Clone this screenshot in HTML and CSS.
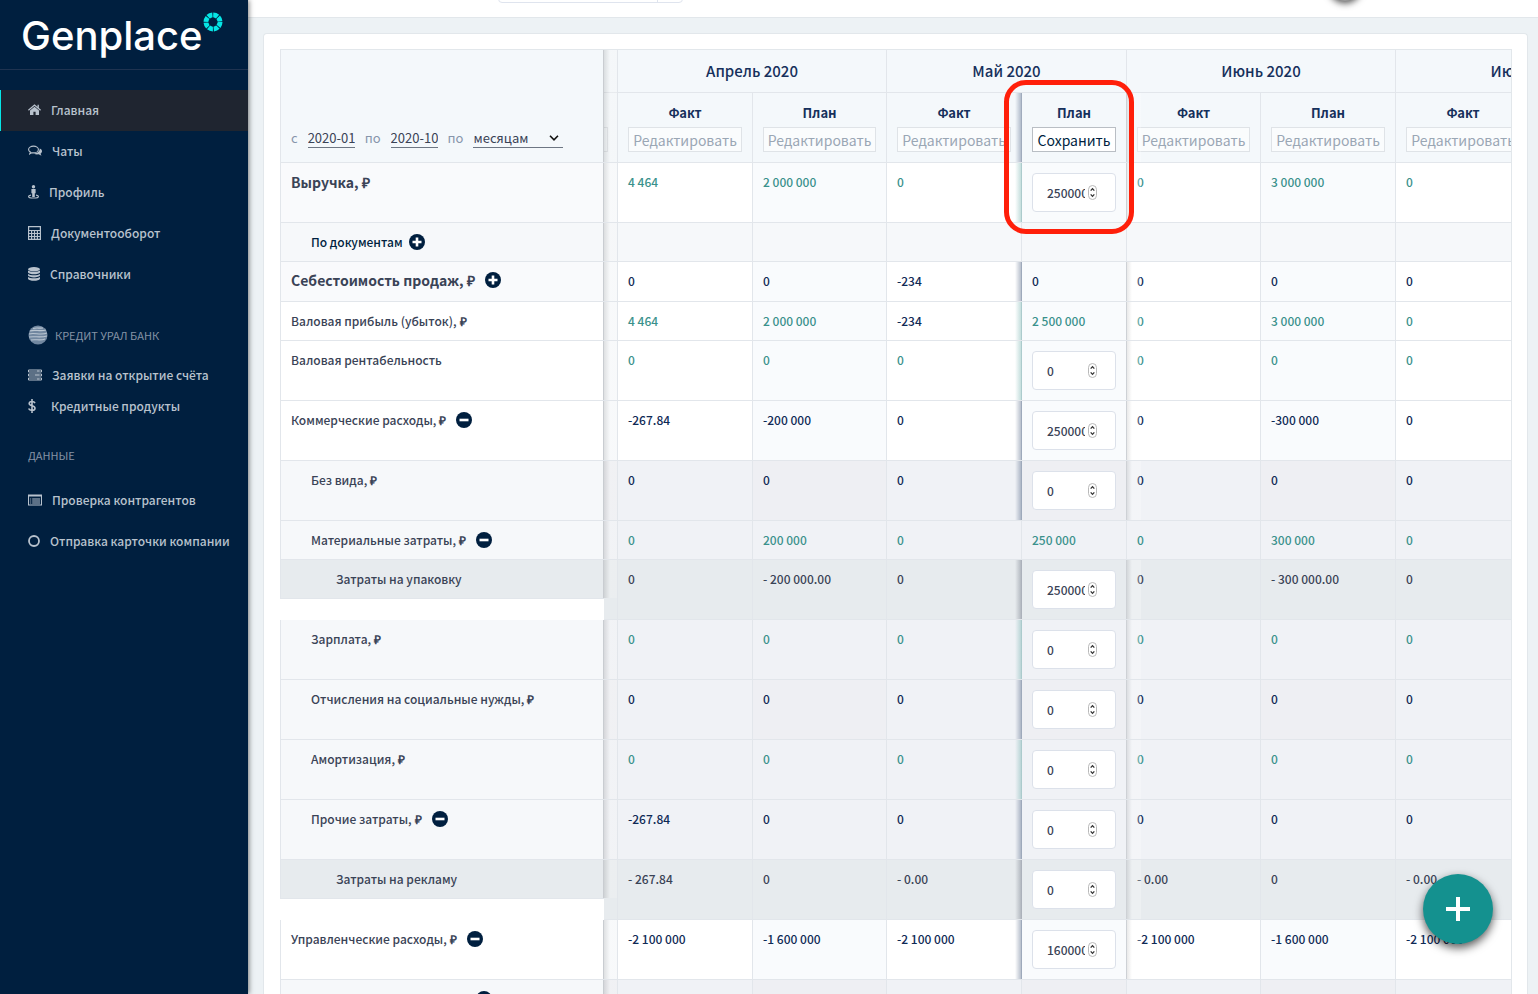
FILE: index.html
```html
<!DOCTYPE html>
<html lang="ru">
<head>
<meta charset="utf-8">
<title>Genplace</title>
<link rel="stylesheet" href="styles.css">
</head>
<body>
<svg class="defs" aria-hidden="true">
  <symbol id="spin" viewBox="0 0 9 15"><rect x=".5" y=".5" width="8" height="14" rx="4" fill="#fff" stroke="#b9b9b9"/><path d="M2.700 5.600 4.500 3.600l1.800 2M2.700 9.400l1.800 2 1.800-2" fill="none" stroke="#333" stroke-width="1.300"/></symbol>
  <symbol id="plus" viewBox="0 0 16 16"><circle cx="8" cy="8" r="8" fill="#001f3f"/><path d="M8 3.500v9M3.500 8h9" stroke="#fff" stroke-width="2.600"/></symbol>
  <symbol id="minus" viewBox="0 0 16 16"><circle cx="8" cy="8" r="8" fill="#001f3f"/><path d="M3.500 8h9" stroke="#fff" stroke-width="2.600"/></symbol>
</svg>
<div class="shell">
  <aside class="sidebar">
    <a class="logo" href="#"><span>Genplace</span>
      <svg class="logo-mark" viewBox="0 0 20 20"><circle cx="10" cy="10" r="7" fill="none" stroke="#05e6e6" stroke-width="5" stroke-dasharray="4.700 .8"/><path d="m10 4.600 1 2.900 2.800-1.300-1.300 2.800 2.900 1-2.900 1 1.300 2.800-2.800-1.300-1 2.900-1-2.900-2.800 1.300 1.300-2.800-2.900-1 2.900-1-1.300-2.800 2.800 1.300z" fill="#001f3f"/></svg>
    </a>
    <nav class="nav">
      <a class="item active" href="#"><svg width="13" height="12" viewBox="0 0 13 12"><path d="M6.500 2.700 2 6.400V11h3.400V7.800h2.200V11H11V6.400z" fill="currentColor"/><path d="M.4 6.200 6.500 1.100l6.100 5.100M10.200.8v3" fill="none" stroke="currentColor" stroke-width="1.300"/></svg>Главная</a>
      <a class="item" href="#"><svg width="14" height="12" viewBox="0 0 14 12"><path d="M5.500 1.100c2.700 0 4.900 1.500 4.900 3.400S8.200 7.900 5.500 7.900c-.6 0-1.100-.1-1.600-.2L1.700 8.900l.7-1.800C1.300 6.500.6 5.600.6 4.500c0-1.900 2.200-3.400 4.900-3.400z" fill="none" stroke="currentColor" stroke-width="1.100"/><path d="M11.700 3.600c1.400.5 2.300 1.500 2.300 2.700 0 1-.6 1.800-1.500 2.400l1 2-2.900-1.400c-1.900.3-3.500 0-4.700-.8 3.300 0 6-1.900 5.800-4.900z" fill="currentColor"/></svg>Чаты</a>
      <a class="item" href="#"><svg width="11" height="14" viewBox="0 0 11 14"><circle cx="5.500" cy="1.800" r="1.700" fill="currentColor"/><path d="M3.400 4h4.200v4.300h-.8V12H4.200V8.300h-.8z" fill="currentColor"/><path d="M3 10.200c-1.500.2-2.400.6-2.400 1.200 0 .9 2.200 1.600 4.900 1.600s4.900-.7 4.900-1.600c0-.6-.9-1-2.400-1.200" fill="none" stroke="currentColor" stroke-width="1.200"/></svg>Профиль</a>
      <a class="item" href="#"><svg width="13" height="14" viewBox="0 0 13 14"><path d="M.6.600h11.800v12.800H.6zM.6 4.500h11.800M.6 7.500h11.800M.6 10.500h11.800M3.600 4.500v9M6.500 4.500v9M9.400 4.500v9" fill="none" stroke="currentColor" stroke-width="1.200"/></svg>Документооборот</a>
      <a class="item" href="#"><svg width="12" height="14" viewBox="0 0 12 14"><ellipse cx="6" cy="2.200" rx="6" ry="2.200" fill="currentColor"/><path d="M0 3.600c2 1.800 10 1.800 12 0v1.900C11 7.900 1 7.900 0 5.500zM0 6.900c2 1.800 10 1.800 12 0v1.700c-1 2.400-11 2.400-12 0zM0 10c2 1.800 10 1.800 12 0v1.700c-1 2.800-11 2.800-12 0z" fill="currentColor"/></svg>Справочники</a>
    </nav>
    <h2 class="group bank"><svg width="20" height="20" viewBox="0 0 20 20"><circle cx="10" cy="10" r="9.500" fill="#7187a0"/><path d="M2 6c5-2 10 1 16-1M1 9c6-2 11 2 18-1M1 12c6-1 11 1 18-1M3 15c5-1 9 1 14-1M5 3.500c3-1 7 0 10-.5" fill="none" stroke="#b9c5d1" stroke-width="1.100"/></svg>КРЕДИТ УРАЛ БАНК</h2>
    <nav class="nav tight">
      <a class="item" href="#"><svg width="14" height="12" viewBox="0 0 14 12"><path d="M.5 1h13v2H.5zM.5 5h13v2H.5zM.5 9h13v2H.5z" fill="none" stroke="currentColor"/><path d="M9 2h2.500M7 6h4.500M9 10h2.500" stroke="currentColor"/></svg>Заявки на открытие счёта</a>
      <a class="item" href="#"><svg width="8" height="14" viewBox="0 0 8 14"><path d="M7 4.100C6.500 3 5.400 2.500 4 2.500c-1.600 0-2.800.8-2.800 2.100C1.200 7.600 7 6 7 9.200c0 1.400-1.300 2.200-3 2.200-1.600 0-2.900-.6-3.400-1.900M4 0v14" fill="none" stroke="currentColor" stroke-width="1.600"/></svg>Кредитные продукты</a>
    </nav>
    <h2 class="group">ДАННЫЕ</h2>
    <nav class="nav data">
      <a class="item" href="#"><svg width="14" height="12" viewBox="0 0 14 12"><path d="M.5 1h13v10H.5zM.5 2h13M2.200 5h1M2.200 7h1M2.200 9h1M4.200 5h7.800M4.200 7h7.800M4.200 9h7.800" fill="none" stroke="currentColor" stroke-width="1.100"/></svg>Проверка контрагентов</a>
      <a class="item" href="#"><svg width="12" height="12" viewBox="0 0 12 12"><circle cx="6" cy="6" r="5" fill="none" stroke="currentColor" stroke-width="1.800"/></svg>Отправка карточки компании</a>
    </nav>
  </aside>
  <main class="main">
    <header class="topbar"><div class="search"><span></span></div><div class="avatar"></div></header>
    <section class="card">
      <div class="scroller">
        <table class="report">
          <colgroup><col class="c-name"><col class="c-sliver"><col class="c-val"><col class="c-alt"><col class="c-val"><col class="c-edit"><col class="c-alt"><col class="c-val"><col class="c-val"><col class="c-alt"></colgroup>
          <thead>
            <tr class="months">
              <th class="corner" rowspan="2">
                <form class="filter">
                  <label for="from">с</label><input id="from" value="2020-01">
                  <label for="to">по</label><input id="to" value="2020-10">
                  <label for="step">по</label><span class="select"><select id="step"><option>месяцам</option></select><svg width="10" height="6" viewBox="0 0 10 6"><path d="m1 .8 4 4 4-4" fill="none" stroke="#111" stroke-width="1.600"/></svg></span>
                </form>
              </th>
              <th></th><th colspan="2">Апрель 2020</th><th colspan="2">Май 2020</th><th colspan="2">Июнь 2020</th><th colspan="2">Июль 2020</th>
            </tr>
            <tr class="kinds">
              <th class="peek"><span></span></th>
              <th>Факт<button type="button">Редактировать</button></th>
              <th>План<button type="button">Редактировать</button></th>
              <th>Факт<button type="button">Редактировать</button></th>
              <th class="edit">План<button type="button" class="save">Сохранить</button><span class="marker"></span></th>
              <th>Факт<button type="button">Редактировать</button></th>
              <th>План<button type="button">Редактировать</button></th>
              <th>Факт<button type="button">Редактировать</button></th>
              <th></th>
            </tr>
          </thead>
          <tbody>
            <tr class="tall top pos"><th><div class="name">Выручка, <b>₽</b></div></th><td></td><td>4 464</td><td>2 000 000</td><td>0</td><td class="edit"><span class="num"><input type="number" aria-label="Выручка" value="2500000"><svg><use href="#spin"/></svg></span></td><td>0</td><td>3 000 000</td><td>0</td><td></td></tr>
            <tr class="docs"><th><div class="name l1">По документам <button type="button" aria-label="Развернуть"><svg><use href="#plus"/></svg></button></div></th><td></td><td></td><td></td><td></td><td></td><td></td><td></td><td></td><td></td></tr>
            <tr class="top"><th><div class="name">Себестоимость продаж, <b>₽</b><button type="button" aria-label="Развернуть"><svg><use href="#plus"/></svg></button></div></th><td></td><td>0</td><td>0</td><td>-234</td><td class="edit">0</td><td>0</td><td>0</td><td>0</td><td></td></tr>
            <tr class="pos"><th><div class="name">Валовая прибыль (убыток), <b>₽</b></div></th><td></td><td>4 464</td><td>2 000 000</td><td class="neg">-234</td><td class="edit">2 500 000</td><td>0</td><td>3 000 000</td><td>0</td><td></td></tr>
            <tr class="tall pos"><th><div class="name">Валовая рентабельность</div></th><td></td><td>0</td><td>0</td><td>0</td><td class="edit"><span class="num"><input type="number" aria-label="Валовая рентабельность" value="0"><svg><use href="#spin"/></svg></span></td><td>0</td><td>0</td><td>0</td><td></td></tr>
            <tr class="tall"><th><div class="name">Коммерческие расходы, <b>₽</b><button type="button" aria-label="Свернуть"><svg><use href="#minus"/></svg></button></div></th><td></td><td>-267.84</td><td>-200 000</td><td>0</td><td class="edit"><span class="num"><input type="number" aria-label="Коммерческие расходы" value="2500000"><svg><use href="#spin"/></svg></span></td><td>0</td><td>-300 000</td><td>0</td><td></td></tr>
            <tr class="tall sub"><th><div class="name l1">Без вида, <b>₽</b></div></th><td></td><td>0</td><td>0</td><td>0</td><td class="edit"><span class="num"><input type="number" aria-label="Без вида" value="0"><svg><use href="#spin"/></svg></span></td><td>0</td><td>0</td><td>0</td><td></td></tr>
            <tr class="sub even pos"><th><div class="name l1">Материальные затраты, <b>₽</b><button type="button" aria-label="Свернуть"><svg><use href="#minus"/></svg></button></div></th><td></td><td>0</td><td>200 000</td><td>0</td><td>250 000</td><td>0</td><td>300 000</td><td>0</td><td></td></tr>
            <tr class="tall deep"><th><div class="name l2">Затраты на упаковку</div></th><td></td><td>0</td><td>- 200 000.00</td><td>0</td><td class="edit"><span class="num"><input type="number" aria-label="Затраты на упаковку" value="2500000"><svg><use href="#spin"/></svg></span></td><td>0</td><td>- 300 000.00</td><td>0</td><td></td></tr>
            <tr class="tall sub even pos"><th><div class="name l1">Зарплата, <b>₽</b></div></th><td></td><td>0</td><td>0</td><td>0</td><td class="edit"><span class="num"><input type="number" aria-label="Зарплата" value="0"><svg><use href="#spin"/></svg></span></td><td>0</td><td>0</td><td>0</td><td></td></tr>
            <tr class="tall sub"><th><div class="name l1">Отчисления на социальные нужды, <b>₽</b></div></th><td></td><td>0</td><td>0</td><td>0</td><td class="edit"><span class="num"><input type="number" aria-label="Отчисления на социальные нужды" value="0"><svg><use href="#spin"/></svg></span></td><td>0</td><td>0</td><td>0</td><td></td></tr>
            <tr class="tall sub even pos"><th><div class="name l1">Амортизация, <b>₽</b></div></th><td></td><td>0</td><td>0</td><td>0</td><td class="edit"><span class="num"><input type="number" aria-label="Амортизация" value="0"><svg><use href="#spin"/></svg></span></td><td>0</td><td>0</td><td>0</td><td></td></tr>
            <tr class="tall sub even"><th><div class="name l1">Прочие затраты, <b>₽</b><button type="button" aria-label="Свернуть"><svg><use href="#minus"/></svg></button></div></th><td></td><td>-267.84</td><td>0</td><td>0</td><td class="edit"><span class="num"><input type="number" aria-label="Прочие затраты" value="0"><svg><use href="#spin"/></svg></span></td><td>0</td><td>0</td><td>0</td><td></td></tr>
            <tr class="tall deep"><th><div class="name l2">Затраты на рекламу</div></th><td></td><td>- 267.84</td><td>0</td><td>- 0.00</td><td class="edit"><span class="num"><input type="number" aria-label="Затраты на рекламу" value="0"><svg><use href="#spin"/></svg></span></td><td>- 0.00</td><td>0</td><td>- 0.00</td><td></td></tr>
            <tr class="tall"><th><div class="name">Управленческие расходы, <b>₽</b><button type="button" aria-label="Свернуть"><svg><use href="#minus"/></svg></button></div></th><td></td><td>-2 100 000</td><td>-1 600 000</td><td>-2 100 000</td><td class="edit"><span class="num"><input type="number" aria-label="Управленческие расходы" value="1600000"><svg><use href="#spin"/></svg></span></td><td>-2 100 000</td><td>-1 600 000</td><td>-2 100 000</td><td></td></tr>
            <tr class="sub"><th><div class="name l1"><span class="rest"></span><button type="button" aria-label="Свернуть"><svg><use href="#minus"/></svg></button></div></th><td></td><td></td><td></td><td></td><td></td><td></td><td></td><td></td><td></td></tr>
          </tbody>
        </table>
      </div>
    </section>
  </main>
</div>
<button class="fab" type="button" aria-label="Добавить"><svg width="24" height="24" viewBox="0 0 24 24"><path d="M12 0v24M0 12h24" stroke="#fff" stroke-width="4"/></svg></button>
</body>
</html>
```

FILE: styles.css
```css
* { box-sizing: border-box; }
body {
  margin: 0;
  font: 500 12px/20px "Noto Sans CJK SC", sans-serif;
  color: #3a4356;
  background: #edf2f5;
}
button, input, select { font: inherit; color: inherit; margin: 0; }
.defs { position: absolute; width: 0; height: 0; }
.shell { display: flex; height: 100vh; overflow: hidden; }

/* Sidebar */
.sidebar {
  flex: 0 0 248px;
  background: #001f3f;
  box-shadow: 1px 0 5px rgba(0, 0, 0, .5);
  z-index: 5;
}
.logo {
  position: relative;
  display: block;
  height: 70px;
  padding: 12px 21px;
  border-bottom: 1px solid #1f3350;
  color: #fff;
  text-decoration: none;
  font: 500 40px/48px Inter, sans-serif;
}
.logo-mark { position: absolute; left: 203px; top: 12px; width: 20px; height: 20px; }
.nav { display: flex; flex-direction: column; padding-top: 20px; }
.item {
  display: flex;
  align-items: center;
  gap: 10px;
  height: 41px;
  padding: 0 0 1px 28px;
  color: #b8c2cd;
  text-decoration: none;
  white-space: nowrap;
}
.active { background: #1f2530; padding-left: 27px; border-left: 1px solid #05e6e6; }
.group {
  display: flex;
  align-items: center;
  gap: 7px;
  height: 20px;
  margin: 39px 0 0 28px;
  font-size: 11px;
  font-weight: 400;
  color: #8593a5;
}
.bank { margin-top: 30px; }
.tight { padding-top: 15px; }
.tight .item { height: 31px; }
.tight .item + .item { gap: 15px; }
.bank + .tight + .group { margin-top: 23px; }
.data { padding-top: 15px; }

/* Main area */
.main { flex: 1; min-width: 0; display: flex; flex-direction: column; }
.topbar {
  flex: 0 0 18px;
  display: flex;
  align-items: flex-end;
  justify-content: space-between;
  padding: 0 176px 0 250px;
  background: #fff;
  border-bottom: 1px solid #e2e7eb;
  overflow: hidden;
}
.search { width: 185px; height: 34px; margin-bottom: 14px; border: 1px solid #dfe4ee; border-radius: 4px; }
.search span { display: block; width: 159px; height: 100%; border-right: 1px solid #dfe4ee; }
.avatar { width: 34px; height: 34px; margin-bottom: 16px; border-radius: 50%; background: #999; box-shadow: 0 2px 7px rgba(0, 0, 0, .7); }
.card {
  flex: 1;
  min-height: 0;
  margin: 15px 10px 0 15px;
  padding: 15px 15px 0 16px;
  background: #fff;
  border: 1px solid #e2e7eb;
  border-bottom: 0;
  border-radius: 4px 4px 0 0;
  overflow: hidden;
}
.scroller { overflow: hidden; border: solid #e2e7eb; border-width: 1px 1px 0 0; }

/* Report table */
.report { width: 1285px; table-layout: fixed; border-collapse: separate; border-spacing: 0; }
.c-name { width: 324px; }
.c-sliver { width: 14px; }
.c-val { width: 135px; }
.c-alt { width: 134px; }
.c-edit { width: 105px; }
.report th, .report td {
  padding: 0;
  border: solid #e2e6eb;
  border-width: 0 1px 1px 0;
  vertical-align: top;
  text-align: left;
}
.report td { position: relative; padding: 9px 10px; color: #0f2a55; white-space: nowrap; }
.report tbody tr { height: 39px; }
.report tbody tr.top { height: 40px; }
.report tbody tr.tall { height: 60px; }
.report thead th { background: #f4f8fb; color: #16305c; text-align: center; }
.months th { height: 43px; font-size: 15px; font-weight: 500; }
.report .months th { vertical-align: middle; }
.kinds th { position: relative; height: 70px; font-size: 13px; font-weight: 700; }
.report .kinds th { padding: 10px 10px 0; }
.kinds button {
  display: block;
  width: 100%;
  height: 25px;
  margin-top: 4px;
  padding: 0;
  border: 1px solid #dfe3e7;
  background: #fafcfd;
  color: #9aa7b5;
  font-size: 14px;
  font-weight: 400;
  line-height: 22px;
  white-space: nowrap;
}
.kinds .save { background: #fff; border-color: #b9bec4; color: #001f3f; }
.report .kinds .peek { padding: 34px 9px 0 0; }
.peek span { display: block; height: 25px; border: solid #dfe3e7; border-width: 1px 1px 1px 0; }
.marker {
  position: absolute;
  z-index: 3;
  left: -18px;
  top: -13px;
  width: 130px;
  height: 154px;
  border: 5px solid #ff1f0a;
  border-radius: 22px;
}

/* Period filter */
.report .months .corner { position: relative; border-left: 1px solid #e2e6eb; vertical-align: bottom; }
.filter { display: flex; align-items: center; gap: 10px; padding: 0 10px 14px; font-size: 13px; font-weight: 400; }
.filter label { color: #8795ab; }
.filter input, .select {
  width: 47px;
  height: 20px;
  padding: 0;
  border: 0;
  border-bottom: 1px solid #6d7683;
  background: transparent;
  color: #3a4356;
}
.filter .select { display: flex; align-items: center; width: 90px; padding-right: 4px; }
.select select {
  flex: 1;
  min-width: 0;
  padding: 0;
  border: 0;
  background: none;
  appearance: none;
}

/* Row name column */
.report tbody th { font-weight: 500; border-bottom: 0; border-right: 0; }
.name {
  position: relative;
  display: flex;
  align-items: center;
  height: 39px;
  padding: 0 0 1px 10px;
  border: solid #e2e6eb;
  border-width: 0 1px 1px;
  background: #fff;
  white-space: nowrap;
}
.name b { margin-left: 3px; }
.name button { width: 16px; height: 16px; margin-left: 10px; padding: 0; border: 0; background: none; }
.name svg { display: block; width: 16px; height: 16px; }
.l1 { padding-left: 30px; }
.l2 { padding-left: 55px; }
.rest { width: 155px; }
.top .name { height: 40px; padding-bottom: 3px; font-size: 14px; font-weight: 700; background: #f9fafc; }
.tall .name { height: 60px; padding-bottom: 22px; }
.docs .name { color: #001f3f; background: #f6f8fa; }
.docs .name button { margin-left: 6px; }
.sub .name { background: #f6f8fa; }
.tall.deep .name { height: 39px; padding-bottom: 1px; background: #e7ebee; }
.name::after, .corner::after {
  content: "";
  position: absolute;
  z-index: 1;
  left: 100%;
  top: 0;
  bottom: 0;
  width: 14px;
  background: linear-gradient(90deg, rgba(0, 0, 0, .12), rgba(245, 245, 245, .3) 50%);
}

/* Value cells */
.report td:nth-child(even) { background: #f9fbfd; }
.report .pos td { color: #3a918c; }
.report .pos .neg { color: #0f2a55; }
.report .docs td { background: #f6f8fa; }
.report .sub td { background: #f0f2f6; }
.report .sub:not(.even) td:nth-child(even) { background: #eeeff3; }
.report .deep td { background: #e7ebee; color: #3a4356; }
.edit::before, .edit::after { content: ""; position: absolute; top: 0; bottom: 0; z-index: 1; }
.edit::before { right: 100%; width: 7px; opacity: .35; background: linear-gradient(270deg, currentColor, transparent); }
.edit::after { left: 100%; width: 15px; background: linear-gradient(90deg, rgba(0, 0, 0, .1), rgba(255, 255, 255, .25) 40%); }
.num {
  display: flex;
  align-items: center;
  height: 39px;
  margin-top: 1px;
  padding: 0 18px 0 14px;
  background: #fff;
  border: 1px solid #dce1ea;
  border-radius: 4px;
  color: #3a4356;
}
.num input {
  flex: 1;
  width: 0;
  min-width: 0;
  margin-right: 3px;
  padding: 0;
  border: 0;
  background: none;
  appearance: textfield;
}
.num input::-webkit-inner-spin-button { display: none; }
.num svg { flex: none; width: 9px; height: 15px; }

/* Floating action */
.fab {
  position: fixed;
  z-index: 6;
  right: 45px;
  bottom: 50px;
  display: grid;
  place-items: center;
  width: 70px;
  height: 70px;
  padding: 0;
  border: 0;
  border-radius: 50%;
  background: #14918f;
  box-shadow: 0 4px 10px rgba(0, 0, 0, .65);
}
```
